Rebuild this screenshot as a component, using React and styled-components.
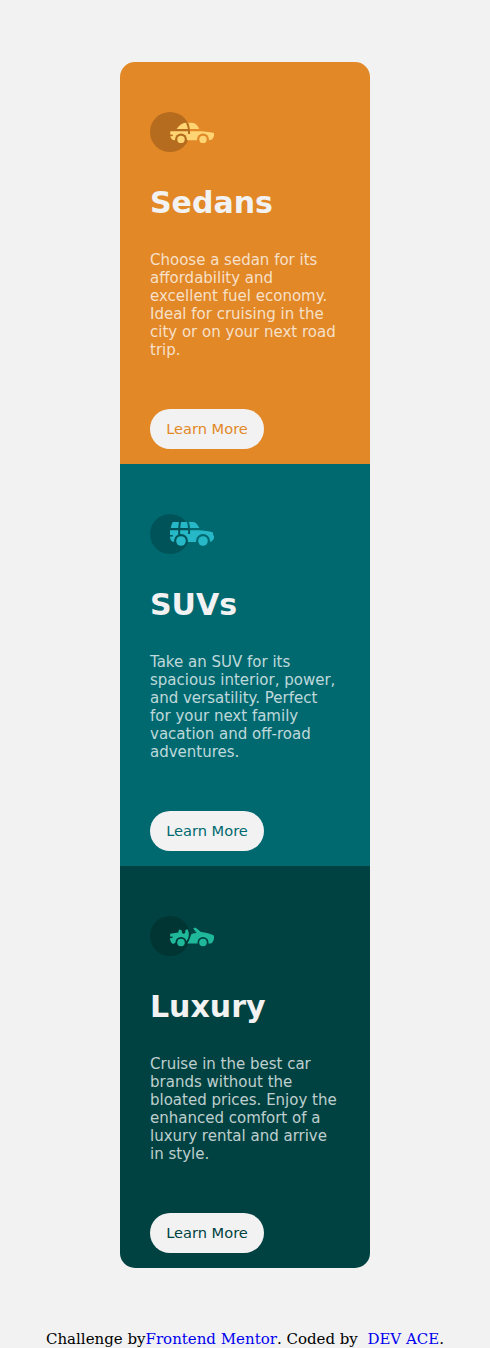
import React from "react";
import styled, { createGlobalStyle } from "styled-components";

const GlobalStyle = createGlobalStyle`
  * { box-sizing: border-box; }
  body { margin: 0; background: #f2f2f2; font-size: 15px; }
`;

const Page = styled.div`
  display: flex;
  flex-direction: column;
  align-items: center;
  padding-top: 62px;
`;

const Cards = styled.main`
  width: 250px;
  border-radius: 15px;
  overflow: hidden;
`;

const Card = styled.section`
  display: flex;
  flex-direction: column;
  align-items: flex-start;
  height: 402px;
  padding: 50px 30px 15px;
  background: ${(p) => p.$color};
  font-family: "DejaVu Sans", sans-serif;
`;

const Icon = styled.svg`
  display: block;
  width: 64px;
  height: 40px;
`;

const Title = styled.h1`
  margin: 33px 0 31px;
  font-size: 30px;
  line-height: 35px;
  font-weight: 700;
  color: #f2f2f2;
`;

const Description = styled.p`
  margin: 0 0 50px;
  font-size: 15px;
  line-height: 18px;
  color: hsla(0, 0%, 100%, 0.75);
`;

const LearnMore = styled.button`
  width: 114px;
  height: 40px;
  padding: 0 0 2px;
  border: 0;
  border-radius: 20px;
  background: #f2f2f2;
  color: ${(p) => p.$color};
  font-family: inherit;
  font-size: 14.6px;
  white-space: nowrap;
`;

const Footer = styled.footer`
  display: flex;
  margin-top: 62px;
  font-family: "DejaVu Serif", serif;
  font-size: 15px;
  line-height: 18px;
  white-space: pre;
  color: #000;
`;

const FooterLink = styled.a`
  color: #0000ee;
  text-decoration: none;
`;

function Wheels({ r, cy }) {
  return (
    <>
      <circle cx="31" cy={cy} r={r} />
      <circle cx="53" cy={cy} r={r} />
    </>
  );
}

function SedanIcon() {
  return (
    <Icon viewBox="0 0 64 40">
      <circle cx="20" cy="20" r="20" fill="#b56c1e" />
      <mask id="sedan-cuts" maskUnits="userSpaceOnUse" x="0" y="0" width="64" height="40">
        <rect width="64" height="40" fill="#fff" />
        <Wheels r="6" cy="27.4" />
        <path d="M36.9 10c1.7 3.4 2.4 6.8 2.2 12" fill="none" stroke="#000" strokeWidth="2" />
        <path d="M19 23.4h3.8" stroke="#000" strokeWidth="1.6" />
      </mask>
      <g fill="#ffd473">
        <g mask="url(#sedan-cuts)">
          <path d="M26.6 17c2.5-3 4.5-5.7 7.5-6 3-.3 7-.3 9.3.1 2.8.5 4.4 3 5.8 5.9z" />
          <path d="M20.3 19.3H48c5 0 11.2.5 15.9 1.7.5 1.5.2 3-.5 4.2-.6 1.8-2.3 3.1-4.2 3.1H25c-2.6 0-4.2-1.5-4.8-4.3z" />
        </g>
        <Wheels r="3.7" cy="27.4" />
      </g>
    </Icon>
  );
}

function SuvIcon() {
  return (
    <Icon viewBox="0 0 64 40">
      <circle cx="20" cy="20" r="20" fill="#005459" />
      <mask id="suv-cuts" maskUnits="userSpaceOnUse" x="0" y="0" width="64" height="40">
        <rect width="64" height="40" fill="#fff" />
        <Wheels r="7" cy="27" />
        <path d="M30.2 7c-1 4-1.1 8-1 14" fill="none" stroke="#000" strokeWidth="2" />
        <path d="M37.5 7c1.6 4 1.9 8 1.6 13" fill="none" stroke="#000" strokeWidth="2" />
        <path d="M19 21.8h3.8" stroke="#000" strokeWidth="1.6" />
      </mask>
      <g fill="#27b8c7">
        <g mask="url(#suv-cuts)">
          <path d="M20.8 14.1c.5-2.4 1-4.4 2-6.1h19.5c3 0 4.8 1.6 7 6.1z" />
          <path d="M20 16.2h29c4.8.2 9.7.8 13.8 2.1l.5 3.2h.7v2.8c-1 2.2-2.5 3.8-5 3.8H25c-3 0-4.5-1.8-5-4.7z" />
        </g>
        <Wheels r="4.8" cy="27" />
      </g>
    </Icon>
  );
}

function LuxuryIcon() {
  return (
    <Icon viewBox="0 0 64 40">
      <circle cx="20" cy="20" r="20" fill="#003534" />
      <mask id="luxury-cuts" maskUnits="userSpaceOnUse" x="0" y="0" width="64" height="40">
        <rect width="64" height="40" fill="#fff" />
        <Wheels r="5.5" cy="26.5" />
        <path d="M19 21.3h3.6" stroke="#000" strokeWidth="1.4" />
      </mask>
      <g fill="#1fb89a">
        <g mask="url(#luxury-cuts)">
          <path d="M20.2 17.8l8.2-1.4c.1-1.4.4-2.2 1-3l2.5 1c-.4 1.5 0 2.6 1 3.2 1.6.8 2.8-.5 2.4-3.6l2.3-.7c1.5 3.1 1.6 6.1.6 8.9l-1.8 3.1-10.3 1.2-3.1 1.5c-1.9-1.5-2.8-3.2-2.9-5.1z" />
          <path d="M43.2 12.6l2.2-1.1 5.6 4.6c4.6.5 9.5 1.5 12.8 3.5.8 1.6.4 3.9-1 6.1-.6 1-1.5 1.8-2.8 1.8H37.3c1.8-2.8 2.8-6.3 4.2-9.6 1.8-.6 3.4-.9 5.1-1z" />
        </g>
        <Wheels r="3.8" cy="26.5" />
      </g>
    </Icon>
  );
}

const vehicles = [
  {
    name: "Sedans",
    color: "#e28827",
    icon: SedanIcon,
    text: "Choose a sedan for its affordability and excellent fuel economy. Ideal for cruising in the city or on your next road trip.",
  },
  {
    name: "SUVs",
    color: "#006970",
    icon: SuvIcon,
    text: "Take an SUV for its spacious interior, power, and versatility. Perfect for your next family vacation and off-road adventures.",
  },
  {
    name: "Luxury",
    color: "#004241",
    icon: LuxuryIcon,
    text: "Cruise in the best car brands without the bloated prices. Enjoy the enhanced comfort of a luxury rental and arrive in style.",
  },
];

export default function App() {
  return (
    <>
      <GlobalStyle />
      <Page>
        <Cards>
          {vehicles.map(({ name, color, icon: VehicleIcon, text }) => (
            <Card key={name} $color={color}>
              <VehicleIcon />
              <Title>{name}</Title>
              <Description>{text}</Description>
              <LearnMore $color={color}>Learn More</LearnMore>
            </Card>
          ))}
        </Cards>
        <Footer>
          <span>Challenge by</span>
          <FooterLink href="#">Frontend Mentor</FooterLink>
          <span>{". Coded by  "}</span>
          <FooterLink href="#">DEV ACE</FooterLink>
          <span>.</span>
        </Footer>
      </Page>
    </>
  );
}
